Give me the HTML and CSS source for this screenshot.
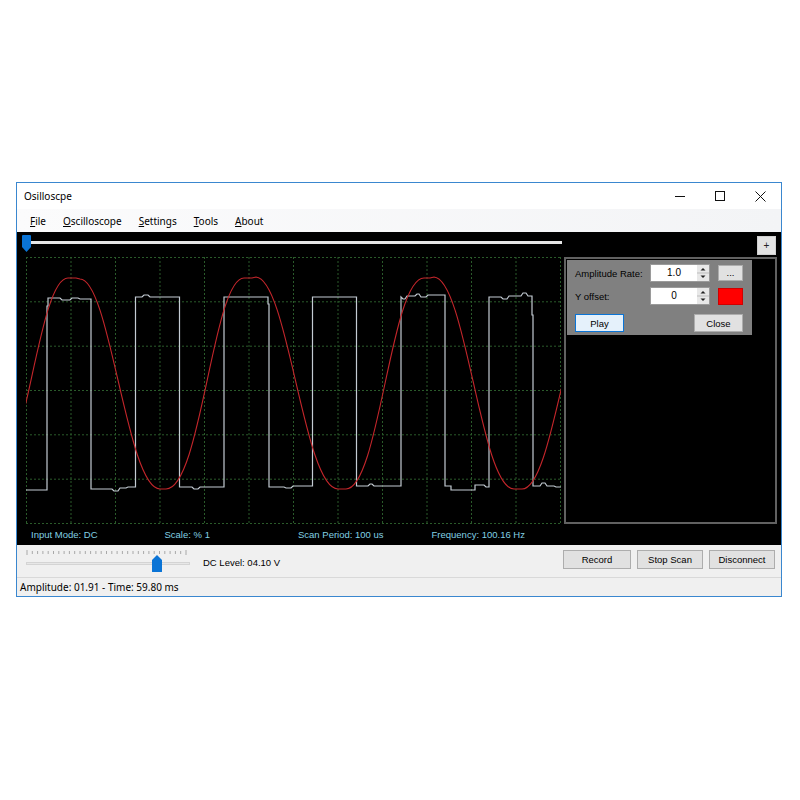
FILE: index.html
```html
<!DOCTYPE html>
<html>
<head>
<meta charset="utf-8">
<title>Osilloscpe</title>
<link rel="stylesheet" href="styles.css">
</head>
<body>
<div class="window">
  <div class="titlebar">
    <span class="title">Osilloscpe</span>
    <div class="wc"><svg width="10" height="10" viewBox="0 0 10 10"><path d="M0 5.5H10" stroke="#111" stroke-width="1"/></svg></div>
    <div class="wc"><svg width="10" height="10" viewBox="0 0 10 10"><rect x="0.5" y="0.5" width="9" height="9" fill="none" stroke="#111" stroke-width="1"/></svg></div>
    <div class="wc"><svg width="11" height="11" viewBox="0 0 11 11"><path d="M0.5 0.5L10.5 10.5M10.5 0.5L0.5 10.5" stroke="#111" stroke-width="1"/></svg></div>
  </div>
  <div class="menubar">
    <span class="mi"><u>F</u>ile</span>
    <span class="mi"><u>O</u>scilloscope</span>
    <span class="mi"><u>S</u>ettings</span>
    <span class="mi"><u>T</u>ools</span>
    <span class="mi"><u>A</u>bout</span>
  </div>
  <div class="scope">
    <div class="scope-top">
      <svg class="hslider" width="542" height="25" viewBox="0 0 542 25">
        <rect x="9" y="9" width="532" height="3" fill="#e6e6e6"/>
        <path d="M1 3.5Q1 3 2 3H9Q10 3 10 4V15L5.5 20L1 15Z" fill="#0a74d6"/>
      </svg>
      <button class="plus">+</button>
    </div>
    <div class="scope-main">
      <svg class="plot" width="535" height="267" viewBox="0 0 535 267">
        <g stroke="#2a5a2a" stroke-width="1" stroke-dasharray="2 2" fill="none">
          <path d="M0.5 0V267M45 0V267M89.5 0V267M134 0V267M178.5 0V267M223 0V267M267.5 0V267M312 0V267M356.5 0V267M401 0V267M445.5 0V267M490 0V267M534.5 0V267"/>
          <path d="M0 0.5H535M0 44.8H535M0 89.2H535M0 133.5H535M0 177.8H535M0 222.2H535M0 266.5H535"/>
        </g>
        <path fill="none" stroke="#c3cbd3" stroke-width="1.2" d="M0 233H21V49H22V41H34L36 43H44L46 41H52L54 42H65V232H86L88 234H92L94 231H100L102 230H109.5V40H116L118 38H122L124 40H153.5V230H166L168 232H172L174 230H198V40H242V47H243V230H258L260 231H265L267 229H286.5V40H330.5V229H342L344 227H346L348 229H375V40L377 42H379L381 39H389L391 37H393L395 40H400L402 38H419V229H425V233H449V228H458L460 230H463V40H475L477 42H481L483 39H495L497 36H500L502 39H506V58H507V229H514L516 226H519L521 229H528L530 230H535"/>
        <path fill="none" stroke="#c4262b" stroke-width="1.1" d="M-38 232C-1 232 11 21 42 21H50L54 22C84 22 101 232 134 232H140C175 232 187 21 218 21H226L230 20C262 22 278 232 312 232H320C353 232 365 21 398 21H404L408 20C440 22 455 232 488 232H496C529 232 543 21 580 21"/>
      </svg>
      <div class="side">
        <div class="panel">
          <div class="row">
            <span class="lbl">Amplitude Rate:</span>
            <div class="spin"><span class="spin-val">1.0</span><span class="spin-btns"><svg width="12" height="16" viewBox="0 0 12 16"><rect x="0" y="0" width="12" height="16" fill="#e8e8e8"/><path d="M0 8H12" stroke="#bdbdbd"/><path d="M3.5 5.5L6 3L8.5 5.5Z" fill="#222"/><path d="M3.5 10.5L6 13L8.5 10.5Z" fill="#222"/></svg></span></div>
            <button class="btn dots">...</button>
          </div>
          <div class="row">
            <span class="lbl">Y offset:</span>
            <div class="spin"><span class="spin-val">0</span><span class="spin-btns"><svg width="12" height="16" viewBox="0 0 12 16"><rect x="0" y="0" width="12" height="16" fill="#e8e8e8"/><path d="M0 8H12" stroke="#bdbdbd"/><path d="M3.5 5.5L6 3L8.5 5.5Z" fill="#222"/><path d="M3.5 10.5L6 13L8.5 10.5Z" fill="#222"/></svg></span></div>
            <span class="color"></span>
          </div>
          <div class="row row3">
            <button class="btn play">Play</button>
            <button class="btn close">Close</button>
          </div>
        </div>
      </div>
    </div>
    <div class="scope-labels">
      <span>Input Mode: DC</span>
      <span>Scale: % 1</span>
      <span>Scan Period: 100 us</span>
      <span>Frequency: 100.16 Hz</span>
    </div>
  </div>
  <div class="controls">
    <svg class="dcslider" width="166" height="32" viewBox="0 0 166 32">
      <g stroke="#a8a8a8" stroke-width="1">
        <path d="M1 5V10M6.3 6V9M11.6 6V9M16.9 6V9M22.2 6V9M27.5 6V9M32.8 6V9M38.1 6V9M43.4 6V9M48.7 6V9M54 6V9M59.3 6V9M64.6 6V9M69.9 6V9M75.2 6V9M80.5 6V9M85.8 6V9M91.1 6V9M96.4 6V9M101.7 6V9M107 6V9M112.3 6V9M117.6 6V9M122.9 6V9M128.2 6V9M133.5 6V9M138.8 6V9M144.1 6V9M149.4 6V9M154.7 6V9M160 5V10"/>
      </g>
      <rect x="0.5" y="17.5" width="163" height="2" fill="#e7e7e7" stroke="#d4d4d4"/>
      <path d="M126 15L131 10L136 15V26.5Q136 27 135.5 27H126.5Q126 27 126 26.5Z" fill="#0a74d6"/>
    </svg>
    <span class="dclabel">DC Level: 04.10 V</span>
    <div class="cbtns">
      <button class="btn cb rec">Record</button>
      <button class="btn cb">Stop Scan</button>
      <button class="btn cb">Disconnect</button>
    </div>
  </div>
  <div class="status">Amplitude: 01.91 - Time: 59.80 ms</div>
</div>
</body>
</html>
```

FILE: styles.css
```css
html, body {
  margin: 0;
  padding: 0;
  background: #ffffff;
}

.window {
  margin: 182px 0 0 16px;
  width: 764px;
  border: 1px solid #3a87cf;
  background: #f0f0f0;
  font-family: "Liberation Sans", Arial, sans-serif;
  font-size: 9.5px;
  color: #000;
}

.titlebar {
  height: 26px;
  display: flex;
  align-items: center;
  background: #ffffff;
  padding-right: 1px;
}

.title {
  flex: 1;
  padding-left: 7px;
  font-family: "Noto Sans", sans-serif;
  font-size: 10px;
  color: #000;
}

.wc {
  width: 40px;
  height: 26px;
  display: flex;
  align-items: center;
  justify-content: center;
}

.wc svg {
  display: block;
}

.menubar {
  height: 23px;
  display: flex;
  align-items: center;
  padding-left: 4.5px;
  background: linear-gradient(to right, #fbfbfc, #f3f4f6);
  font-family: "Noto Sans", sans-serif;
  font-size: 10px;
}

.mi {
  padding: 0 8.5px;
  line-height: 16px;
}

.mi u {
  text-decoration-thickness: 1px;
  text-underline-offset: 1px;
}

.scope {
  height: 313px;
  background: #000;
  display: flex;
  flex-direction: column;
}

.scope-top {
  height: 25px;
  display: flex;
}

.hslider {
  display: block;
  margin-left: 4px;
}

.plus {
  margin: 4px 5px 0 auto;
  width: 19px;
  height: 19px;
  padding: 0;
  border: 1px solid #cfcfcf;
  background: #e3e3e3;
  font-family: "Liberation Sans", Arial, sans-serif;
  font-size: 10px;
  line-height: 15px;
  color: #222;
}

.scope-main {
  display: flex;
  height: 267px;
}

.plot {
  display: block;
  margin-left: 9px;
}

.side {
  margin-left: 3px;
  width: 213px;
  height: 267px;
  box-sizing: border-box;
  border: 2px solid #616161;
  padding: 1px;
}

.panel {
  width: 185px;
  height: 75px;
  box-sizing: border-box;
  background: #808080;
  padding: 4px 0 0 8px;
}

.row {
  display: flex;
  align-items: center;
  height: 18px;
}

.row + .row {
  margin-top: 5px;
}

.row.row3 {
  margin-top: 9px;
}

.lbl {
  width: 75px;
  color: #000;
}

.spin {
  width: 60px;
  height: 18px;
  box-sizing: border-box;
  display: flex;
  background: #ffffff;
  border: 1px solid #9a9a9a;
}

.spin-val {
  flex: 1;
  text-align: center;
  font-size: 10px;
  line-height: 16px;
}

.spin-btns {
  width: 12px;
  height: 16px;
}

.spin-btns svg {
  display: block;
}

.btn {
  box-sizing: border-box;
  padding: 0;
  background: #e1e1e1;
  border: 1px solid #adadad;
  font-family: "Liberation Sans", Arial, sans-serif;
  font-size: 9.5px;
  color: #000;
}

.dots {
  margin-left: 8px;
  width: 25px;
  height: 16px;
  line-height: 12px;
}

.color {
  margin-left: 8px;
  width: 25px;
  height: 17px;
  box-sizing: border-box;
  background: #ff0000;
  border: 1px solid #d00000;
}

.play {
  width: 49px;
  height: 18px;
  background: #e5f1fb;
  border: 1px solid #0a74d6;
}

.close {
  margin-left: 70px;
  width: 49px;
  height: 18px;
}

.scope-labels {
  height: 21px;
  display: flex;
  align-items: center;
  padding-left: 14px;
  color: #82d0e4;
}

.scope-labels span {
  width: 133.5px;
  flex: none;
}

.controls {
  height: 32px;
  display: flex;
  align-items: flex-start;
  background: #f0f0f0;
}

.dcslider {
  display: block;
  margin-left: 9px;
}

.dclabel {
  margin-left: 11px;
  margin-top: 12px;
  line-height: 12px;
}

.cbtns {
  margin: 5px 6px 0 auto;
  display: flex;
  gap: 6px;
}

.cb {
  width: 66px;
  height: 19px;
}

.cb.rec {
  width: 68px;
}

.status {
  height: 19px;
  box-sizing: border-box;
  border-top: 1px solid #d9d9d9;
  padding-left: 3px;
  background: #f0f0f0;
  font-family: "Noto Sans", sans-serif;
  font-size: 10px;
  line-height: 18px;
}
```
